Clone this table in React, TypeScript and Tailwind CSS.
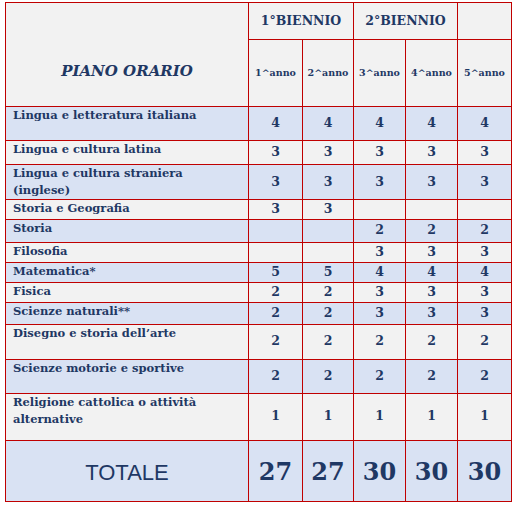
const rows: { label: string; vals: string[]; h: number; blue: boolean }[] = [
  { label: 'Lingua e letteratura italiana', vals: ['4', '4', '4', '4', '4'], h: 34, blue: true },
  { label: 'Lingua e cultura latina', vals: ['3', '3', '3', '3', '3'], h: 24, blue: false },
  { label: 'Lingua e cultura straniera (inglese)', vals: ['3', '3', '3', '3', '3'], h: 35, blue: true },
  { label: 'Storia e Geografia', vals: ['3', '3', '', '', ''], h: 19, blue: false },
  { label: 'Storia', vals: ['', '', '2', '2', '2'], h: 23, blue: true },
  { label: 'Filosofia', vals: ['', '', '3', '3', '3'], h: 19, blue: false },
  { label: 'Matematica*', vals: ['5', '5', '4', '4', '4'], h: 20, blue: true },
  { label: 'Fisica', vals: ['2', '2', '3', '3', '3'], h: 20, blue: false },
  { label: 'Scienze naturali**', vals: ['2', '2', '3', '3', '3'], h: 22, blue: true },
  { label: 'Disegno e storia dell’arte', vals: ['2', '2', '2', '2', '2'], h: 35, blue: false },
  { label: 'Scienze motorie e sportive', vals: ['2', '2', '2', '2', '2'], h: 34, blue: true },
  { label: 'Religione cattolica o attività alternative', vals: ['1', '1', '1', '1', '1'], h: 47, blue: false },
];

const serif = "font-['DejaVu_Serif',serif]";

export default function App() {
  return (
    <div className="w-[519px] h-[505px] bg-white pl-[5px] pt-[2px]">
      <table className={`table-fixed border-collapse text-[#1f3864] font-bold ${serif}`}>
        <colgroup>
          <col className="w-[243px]" />
          <col className="w-[54px]" />
          <col className="w-[51px]" />
          <col className="w-[52px]" />
          <col className="w-[52px]" />
          <col className="w-[54px]" />
        </colgroup>
        <tbody>
          <tr className="h-[37px] bg-[#f2f2f2]">
            <td rowSpan={2} className="border border-[#c00000] text-center align-middle pt-[34px] text-[15px] italic">
              PIANO ORARIO
            </td>
            <td colSpan={2} className="border border-[#c00000] text-center text-[12.5px]">1°BIENNIO</td>
            <td colSpan={2} className="border border-[#c00000] text-center text-[12.5px]">2°BIENNIO</td>
            <td className="border border-[#c00000]"></td>
          </tr>
          <tr className="h-[67px] bg-[#f2f2f2]">
            {['1^anno', '2^anno', '3^anno', '4^anno', '5^anno'].map((a) => (
              <td key={a} className="border border-[#c00000] text-center text-[9.5px]">{a}</td>
            ))}
          </tr>
          {rows.map((r) => (
            <tr key={r.label} className={r.blue ? 'bg-[#d9e2f3]' : 'bg-[#f2f2f2]'} style={{ height: r.h }}>
              <td className="border border-[#c00000] align-top pl-[7px] pr-2 text-[11.5px] leading-[17px]">{r.label}</td>
              {r.vals.map((v, i) => (
                <td key={i} className="border border-[#c00000] text-center align-middle text-[12.5px]">{v}</td>
              ))}
            </tr>
          ))}
          <tr className="h-[61px] bg-[#d9e2f3]">
            <td className="border border-[#c00000] text-center align-middle pt-[3px] font-normal text-[22px] font-['Liberation_Sans',sans-serif]">
              TOTALE
            </td>
            {['27', '27', '30', '30', '30'].map((v, i) => (
              <td key={i} className="border border-[#c00000] text-center align-middle pt-[3px] text-[24px]">{v}</td>
            ))}
          </tr>
        </tbody>
      </table>
    </div>
  );
}
